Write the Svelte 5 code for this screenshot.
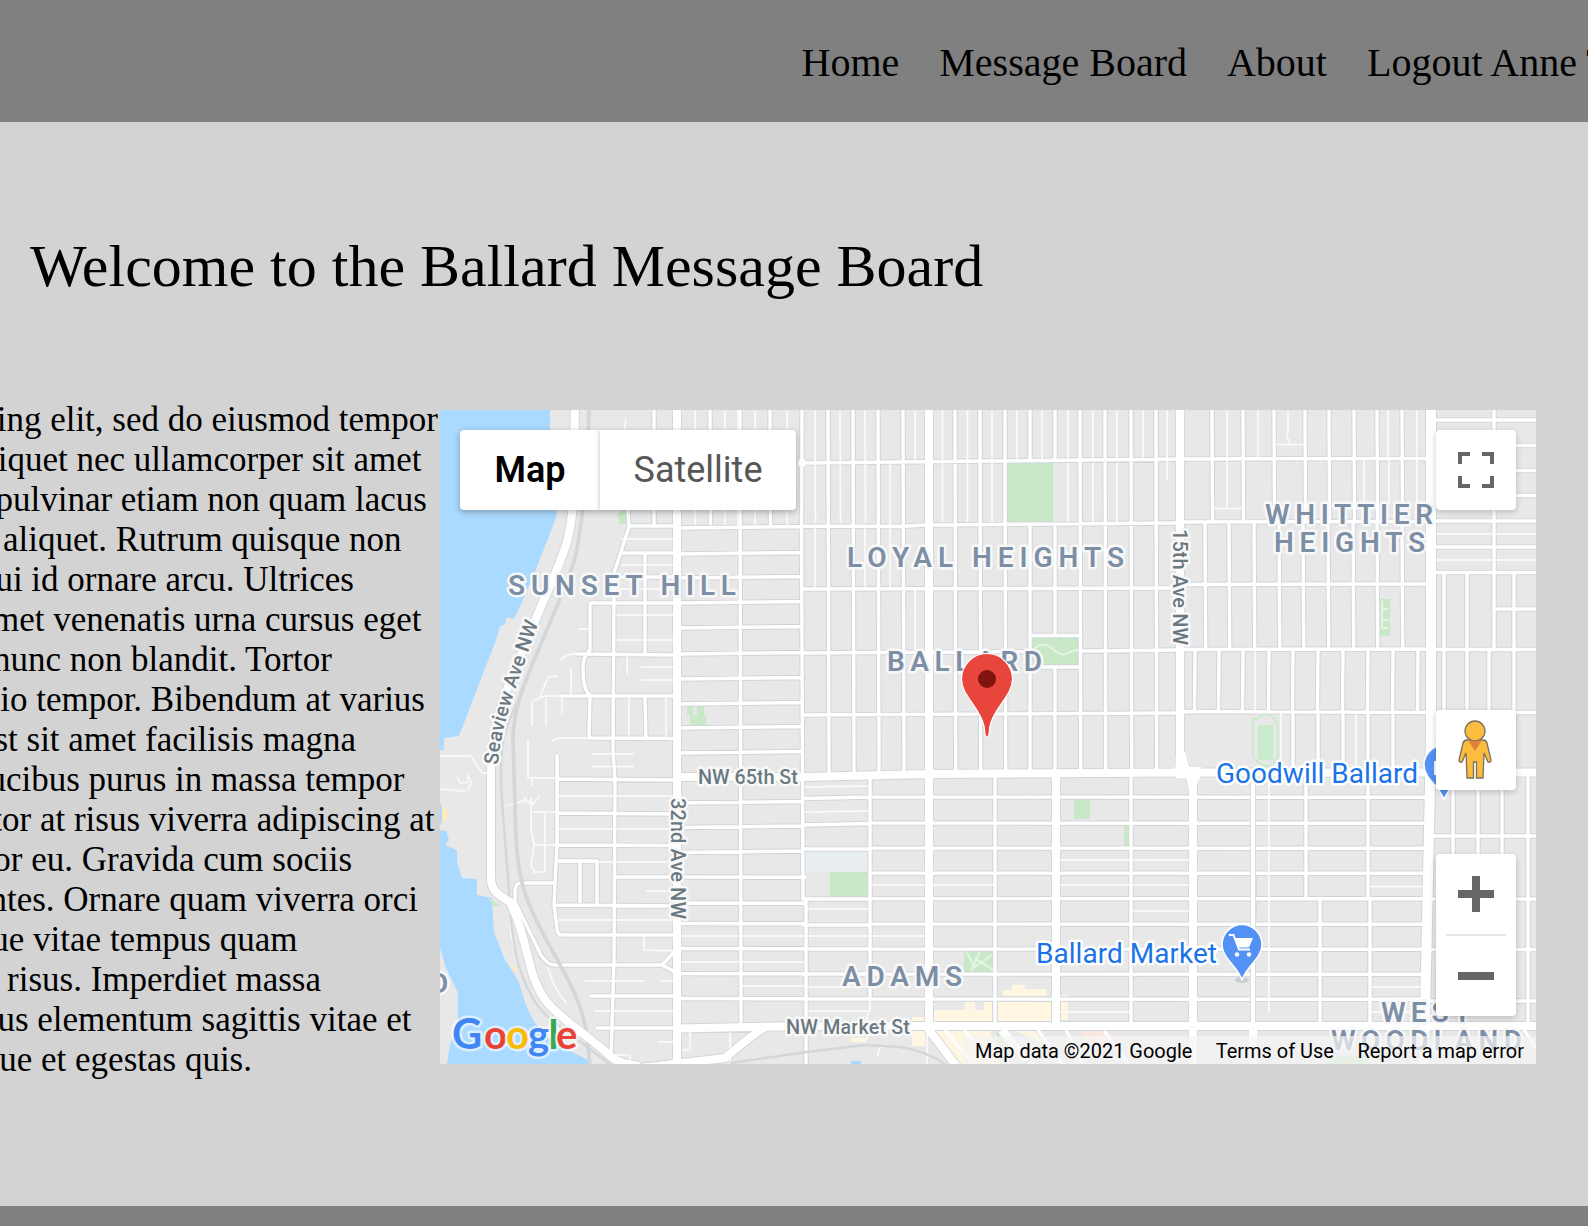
<script>
  const nav = ['Home', 'Message Board', 'About', 'Logout Anne Thompson'];

  // Each line ends at its own right edge and runs off the left side of the page.
  const lines = [
    ['cing elit, sed do eiusmod tempor', 438],
    ['liquet nec ullamcorper sit amet', 421.5],
    ['pulvinar etiam non quam lacus', 427],
    ['aliquet. Rutrum quisque non', 401.5],
    ['qui id ornare arcu. Ultrices', 354],
    ['amet venenatis urna cursus eget', 421.5],
    ['nunc non blandit. Tortor', 332],
    ['dio tempor. Bibendum at varius', 425],
    ['est sit amet facilisis magna', 356],
    ['aucibus purus in massa tempor', 404.5],
    ['tor at risus viverra adipiscing at', 434.5],
    ['tor eu. Gravida cum sociis', 352],
    ['ntes. Ornare quam viverra orci', 418],
    ['que vitae tempus quam', 297.5],
    ['risus. Imperdiet massa', 321],
    ['cus elementum sagittis vitae et', 411.5],
    ['que et egestas quis.', 252]
  ];

  // [x list, y start, y end, slant]
  const down = (xs, a, b, s = 0) => xs.map((x) => `M${x},${a}L${x + s},${b}`).join('');
  // [y list, x start, x end, rise]
  const across = (ys, a, b, s = 0) => ys.map((y) => `M${a},${y}L${b},${y + s}`).join('');

  const minor =
    down([828, 853, 878, 903], 410, 773, 1) +
    down([955, 980, 1005, 1080, 1105, 1131, 1156], 410, 771, 0.7) +
    'M1030,410V462M1005,462V523M1030,524V771M1055,410V462M1055,524V634M1055,666V771M1030,635.5H1079M1030,667H1079' +
    across([463], 802, 1180, -4) + 'M802,526L900,526.500L925,525L1180,523' +
    across([589], 802, 1180, -1) + 'M802,653L1030,651.500M1079,651L1180,650' + across([715], 802, 1180, -2) +
    'M802,410L801.500,520L803,900' + 'M806,900V1064' +
    down([740], 410, 1023, 1) +
    down([654], 410, 526) + down([710, 770], 410, 525, 0.5) +
    across([528, 554, 578, 603, 628, 654, 679, 704, 728, 753, 803, 827.5, 852.5], 677, 802, -1.5) +
    across([877, 903, 923.5, 948.5, 973.5, 998.5], 677, 806, 0.3) +
    'M628,510L629,527L614,573V590L613,750L615,780L614,960L611,1057' +
    'M629,526H677M622,553H677M616,577H677M677,579M590,603H677M590,603V650Q583,656 583,668Q583,690 590,695L589,738M577,654L677,655M560,696H677M589,738L677,738.500' +
    'M645,553V653M645,697L646,738M558,779L677,780M558,813L677,814M557,845L677,845.500M557,755V842L554,905L557,928Q557,935 563,935H677' +
    'M558,861H597V904M580,861V903M554,905L677,906M555,883H521Q515,883 515,892V902L520,912L541,955Q547,965 555,965H662L675,951M662,965L677,973M590,996H677M596,1028H677M615,877H677' +
    down([870], 778, 1000, 0) + down([995, 1131], 773, 1025, 0) +
    across([798.500, 825], 802, 870, -1.5) + across([797, 823, 848, 873, 898.500, 924, 949, 974, 999], 870, 1425, 0.3) +
    across([849, 899, 925, 949, 974, 999], 802, 870) +
    'M1306,775V898M1368,775V898M1320,898V1025M1370,898V1025' +
    down([1212, 1243, 1274, 1305, 1329, 1354, 1377, 1402], 410, 523, 0.5) +
    down([1205, 1229, 1254, 1279, 1303, 1328, 1353, 1377, 1402], 523, 648, 0.7) +
    down([1195, 1219, 1243, 1269, 1293, 1318, 1343, 1368, 1393, 1418], 648, 712, -0.5) +
    down([1293, 1318, 1343, 1368, 1393], 712, 773) +
    across([459, 522, 584.5, 649.5], 1180, 1431, -0.5) + across([711.5], 1180, 1431, 1) +
    across([420, 445.5, 470.5, 495.5, 521, 547, 572.500, 649.5, 712.5], 1431, 1536) +
    'M1494,410V649M1495,609H1536' + down([1444, 1467], 572, 712) + 'M1489,649V712' + down([1514], 572, 772) +
    down([1453, 1478, 1502], 775, 855) + down([1528], 775, 1023) + across([836, 899, 949.5, 1001], 1427, 1536);

  const lane =
    down([815, 840, 865], 410, 523, 0.5) + 'M915,410V460M865,525V588M815,525V588M890,463V588M915,590V650' +
    down([942.500, 967.500, 992, 1017, 1042, 1068, 1093, 1117, 1143], 410, 460) +
    down([942.500, 967.500, 992, 1068, 1093, 1117], 463, 522) + 'M1167,410V480' +
    down([695, 725, 755, 787], 410, 525) + 'M738,410V525' +
    across([539, 565], 622, 673) + across([589, 615, 640], 615, 673) + across([667, 680], 641, 673) +
    'M578,629H590M577,654Q570,652 560,660M560,696L545,696Q532,700 532,704V726M546,698V726M562,695V714M540,697L548,677L558,676M571,669V695M627,655V674M629,697V738M666,697V738M626,419L624,432' +
    across([754, 766.5], 592, 634) + across([796, 829, 862, 920], 558, 673) + across([891], 646, 673) +
    'M558,755V842M528,740V778H558M532,778V786M533,812H558M533,845H558M531,798V828L534,845L531,865L535,873M545,812V872M533,872H543M540,796L532,805M524,798L532,805M552,741L558,738H590' +
    across([981], 585, 645) + across([981], 661, 677) + across([1011], 594, 677) + 'M658,1042H677M644,936V950L675,951' +
    across([936, 962], 677, 806) + across([986], 741, 806) + across([787, 812], 804, 869, -1) +
    across([860, 885], 1058, 1131) + across([885], 870, 995) + across([860, 885, 911], 1131, 1190) +
    across([936], 806, 925) + across([909, 987, 1011], 806, 870) + across([1012], 1058, 1131) +
    'M1269,775V1013M1370,886.500H1425M1370,987H1425M1370,1012H1425' +
    'M1227,410V508M1212,508.500H1243M1258,410V457M1288,410V430L1287,436L1290,444M1275,444.500H1305M1388,410V457M1417,410V457M1364,460V505M1389,460V505M1417,460V505M1255,649V711M1281,712V765M1356,712V765M1431,534H1536M1431,560H1536' +
    'M440,756H471L482,773H488M510,905L511,935L519,963M548,967Q555,993 567,1003M870,998V1010L867,1016V1040M730,1032V1064M927,1030V1064M878,1056Q878,1046 885,1046';

  const major =
    'M677,410V1064M929,410V1030L958,1068M1056,773V1026M1180,410V755L1193,785V1064M1193,775V785' +
    'M677,777L802,777L929,774L1180,772.500H1536M677,1028.500L802,1026L1536,1026M766,1027Q758,1030 725,1058L640,1068' +
    'M575,408C573,500 574,520 566,545C557,573 542,602 534,624C506,690 492,720 491,762V878C491,892 500,896 510,902C519,920 523,937 530,965C535,984 540,993 546,1001C560,1019 590,1037 610,1056C618,1063 628,1065 640,1066';

  const labels = [
    ['SUNSET HILL', 508, 595, 228], ['LOYAL HEIGHTS', 847, 567, 277], ['BALLARD', 887, 671, 155],
    ['WHITTIER', 1265, 524, 168], ['HEIGHTS', 1274, 552, 151], ['ADAMS', 842, 986, 120],
    ['WEST', 1381, 1022, 90], ['WOODLAND', 1331, 1050, 191], ['D', 430, 993, 19]
  ];
</script>

<div class="page">
  <header>
    <nav>
      {#each nav as item}<a href="#top">{item}</a>{/each}
    </nav>
  </header>
  <main>
    <h1>Welcome to the Ballard Message Board</h1>
    <section>
      <div class="copy">
        {#each lines as [text, width]}<p style:width="{width}px">{text}</p>{/each}
      </div>
      <div class="map">
        <svg class="tiles" viewBox="440 410 1096 654">
          <rect x="440" y="410" width="1096" height="654" fill="#e8e8e8" />
          <g fill="#aadaff">
            <path d="M440,410H550V500L557,510L556,518L533,577L517,613L513,619L507,617L505,624L500,627L496,640L459,736L444,738V750H440Z" />
            <path d="M440,830L446,831L449,840L445,845L457,850V862L462,878L477,879V895L492,898L494,932L505,960L518,980L526,1005L533,1020L543,1034L560,1046L588,1060V1064H447L450,1045L458,1020V993L446,968L440,948Z" />
            <path d="M440,803Q447,815 440,825ZM851,1061H861V1064H851Z" />
          </g>
          <g fill="#ffebb8"><path d="M442,804Q453,815 442,823ZM509,964L518,969L515,972Z" /></g>
          <g fill="#c8e8c8">
            <path d="M1007,463H1053V522H1007ZM1032,637H1079V665H1032ZM617,515L622,510H628V524H620ZM687,705H693V715H697V705H704V715H706V725H690V715H687ZM1379,599H1390V636H1379ZM1074,800H1090V819H1074ZM1124,825H1129V846H1124ZM830,872H868V897H830ZM964,951H993V972H964ZM488,898L502,906H493ZM1255,876H1257V919H1254ZM997,1031L1005,1044L997,1043ZM1332,1056H1370V1064H1325Z" />
            <path d="M1258,725H1273V760H1258Z" fill="#c9eccb" />
          </g>
          <rect x="805" y="849" width="63" height="23" fill="#e8edf0" />
          <g fill="#fef6e0">
            <path d="M934,1010H965V1002H975V1010H984V1002H992V1021H934ZM997,1002H1051V1021H997ZM1003,990H1012V985H1025V989H1047V996H1003ZM1061,995H1068V1020H1061ZM912,1017H925V1046H912ZM930,1031H990L1000,1064H960ZM1015,1031H1035L1045,1044ZM851,1038H866V1042H851Z" />
            <path d="M1080,1031H1108L1120,1045H1085Z" fill="#fae6e3" />
          </g>
          <g fill="none" stroke-linejoin="round">
            <path class="casing thin" d={minor} />
            <path class="casing wide" d={major} />
            <path class="casing giant" d="M1431,410V735L1424,1064" />
            <path class="lane" d={lane} />
            <path d={minor} stroke="#fff" stroke-width="3.4" />
            <path d="M945,1030L973,1064M964,1030L994,1064M1038,1030L1063,1064M1066,1030L1083,1064M1104,1031L1129,1064M1522,1027L1545,1060" stroke="#fff" stroke-width="3" />
            <path d="M1002,1030L1031,1066" stroke="#fff" stroke-width="8" />
            <path d="M1034,650C1037,643 1048,644 1053,649C1060,656 1065,656 1070,652C1074,650 1076,650 1079,650M966,951L975,967L992,955M971,971L980,952M975,958L993,970M1382,601V628H1388M1381,609H1388M1381,620H1389" stroke="#e3f4e3" stroke-width="2" />
            <path d="M1253,719H1257Q1266,710 1275,719Q1278,724 1278,731V755Q1275,766 1266,766Q1256,764 1253,755Z" stroke="#c9eccb" stroke-width="2" />
            <path d="M457,777L460,783L468,782V775L471,781Q471,791 463,791L440,789M505,806L527,800M690,1032V1050H682M612,1055H630V1064" stroke="#f6f6f6" stroke-width="2" />
            <path class="rail" d="M589,410C588,480 582,520 577,549C573,570 563,590 557,606L537,653C524,684 513,710 513,740L515,802Q515,850 521,878C526,903 540,928 553,952C566,976 581,1000 586,1030L590,1066" />
            <path class="rail slim" d="M519,700C498,735 500,770 502,802L508,878L511,920C514,950 520,975 529,991C536,1007 550,1020 562,1028L615,1068" />
            <path class="rail slim" d="M730,1063L807,1052L865,1045L900,1047C920,1050 936,1057 947,1066M1020,1066L1034,1058" />
            <path d={major} stroke="#fff" stroke-width="8.2" />
            <path d="M1431,410V735L1424,1064" stroke="#fff" stroke-width="10" />
            <path class="casing" d="M1253,777V1022" stroke-width="6" />
            <path d="M1253,775V1026" stroke="#fff" stroke-width="4.400" />
            <path d="M1253,1026V1064" stroke="#fff" stroke-width="8" />
          </g>
          <path d="M1176,752H1185L1189,767H1201V776L1197,784V792H1189L1187,778H1176L1174,769L1176,766Z" fill="#fff" />
          <circle cx="802" cy="463" r="4" fill="#fff" />

          <g class="area">
            {#each labels as [name, x, y, length]}
              <text {x} {y} textLength={length}>{name}</text>
            {/each}
          </g>
          <g class="street">
            <text x="698" y="784" textLength="100">NW 65th St</text>
            <text x="786" y="1034" textLength="124">NW Market St</text>
            <text transform="translate(1173 529) rotate(90)" textLength="116">15th Ave NW</text>
            <text transform="translate(671 798) rotate(90)" textLength="121">32nd Ave NW</text>
            <path id="seaview" d="M498,765C500,730 514,692 540,619" fill="none" stroke="none" />
            <text><textPath href="#seaview" textLength="148">Seaview Ave NW</textPath></text>
          </g>
          <g class="place">
            <text x="1216" y="783" textLength="202">Goodwill Ballard</text>
            <text x="1036" y="963" textLength="181">Ballard Market</text>
          </g>
          <ellipse cx="1242" cy="980" rx="7" ry="3" fill="#c9ccd2" />
          <g class="pins">
            <path d="M1242,980.500C1239,967 1222,959 1222,944.500A20,20 0 1 1 1262,944.500C1262,959 1245,967 1242,980.500Z" />
            <path d="M1444,800.500C1441,787 1424,779 1424,765A20,20 0 1 1 1464,765C1464,779 1447,787 1444,800.500Z" />
          </g>
          <path d="M1434,761H1445V775H1434Z" fill="#fff" />
          <path d="M1229,935H1233.500L1239,949.500H1250" fill="none" stroke="#fff" stroke-width="1.8" />
          <path d="M1235,938H1253L1249,947.500H1239Z" fill="#fff" />
          <circle cx="1237" cy="954.500" r="2.200" fill="#fff" /><circle cx="1249" cy="954.500" r="2.200" fill="#fff" />
          <path d="M987,737C984,737 985,731 984,726C980,707 961.500,696 961.500,679A25.500,25.500 0 1 1 1012.500,679C1012.500,696 994,707 990,726C989,731 990,737 987,737Z" fill="#e8453c" stroke="#fff" stroke-width="1.200" />
          <circle cx="987" cy="679" r="9" fill="#811411" />
          <g class="logo">
            <text y="1049"><tspan x="452" class="cap" fill="#4285f4">G</tspan><tspan x="484" fill="#ea4335">o</tspan><tspan x="506" fill="#fbbc05">o</tspan><tspan x="528" fill="#4285f4">g</tspan><tspan x="548.500" fill="#34a853">l</tspan><tspan x="556" fill="#ea4335">e</tspan></text>
          </g>
        </svg>

        <div class="types"><button class="on">Map</button><button>Satellite</button></div>
        <button class="control full" aria-label="Fullscreen">
          <svg viewBox="0 0 18 18"><path d="M0,0V6H2V2H6V0ZM12,0V2H16V6H18V0ZM16,16H12V18H18V12H16ZM2,12H0V18H6V16H2Z" fill="#666" /></svg>
        </button>
        <button class="control peg" aria-label="Street view">
          <svg viewBox="0 0 34 60" class="person">
            <g fill="#fbbc3f" stroke="#77705f" stroke-width="1.300">
              <path d="M9,20L25,20Q28,20 29,23L33,40Q33,43 30,42L26,33L25,58H18.500V42H15.500V58H9L8,33L4,42Q1,43 1,40L5,23Q6,20 9,20Z" />
              <circle cx="17" cy="11" r="10" />
            </g>
            <path d="M10,20Q17,22 24,20L17,31Z" fill="#e0803a" />
          </svg>
        </button>
        <div class="zoom">
          <button aria-label="Zoom in"><svg viewBox="0 0 18 18"><path d="M7,0H11V7H18V11H11V18H7V11H0V7H7Z" fill="#666" /></svg></button>
          <hr />
          <button aria-label="Zoom out"><svg viewBox="0 0 18 18"><path d="M0,7H18V11H0Z" fill="#666" /></svg></button>
        </div>
        <div class="legal"><span>Map data ©2021 Google</span><span>Terms of Use</span><span>Report a map error</span></div>
      </div>
    </section>
  </main>
  <footer></footer>
</div>

<style>
  :global(body) { margin: 0; overflow: hidden; }
  .page { height: 1226px; width: 1588px; overflow: hidden; display: flex; flex-direction: column; background: #d3d3d3; font-family: 'Liberation Serif', serif; color: #000; }
  header { height: 122px; background: #808080; display: flex; align-items: center; flex: none; }
  nav { display: flex; gap: 40px; margin-left: 801.500px; padding-top: 4px; white-space: nowrap; }
  nav a { color: #000; text-decoration: none; font-size: 40px; line-height: 46px; }
  main { height: 1084px; flex: none; }
  h1 { margin: 0; padding: 110px 0 0 30px; height: 166px; font-size: 60px; font-weight: 400; line-height: 69px; white-space: nowrap; }
  section { display: flex; align-items: flex-start; }
  .copy { width: 440px; flex: none; padding-top: 1px; }
  p { margin: 0; height: 40px; line-height: 41px; font-size: 35px; display: flex; justify-content: flex-end; white-space: nowrap; overflow: hidden; }
  .map { position: relative; width: 1096px; height: 654px; margin-top: 12px; overflow: hidden; font-family: Roboto, sans-serif; }
  .tiles { display: block; width: 1096px; height: 654px; }
  .casing { stroke: #d2d5d9; }
  .thin { stroke-width: 5.4; }
  .wide { stroke-width: 10; }
  .giant { stroke-width: 12; }
  .lane { stroke: #fbfbfb; stroke-width: 1.6; }
  .rail { stroke: #d3d7da; stroke-width: 3.800; }
  .slim { stroke-width: 2.4; }
  text { paint-order: stroke; stroke: #f8f8f8; stroke-linejoin: round; }
  .area { font-size: 28px; font-weight: 600; fill: #7d8fa5; }
  .area text { stroke-width: 5px; }
  .street { font-size: 20px; font-weight: 500; fill: #6b7880; }
  .street text { stroke-width: 5px; }
  .place { font-size: 28px; fill: #1a73e8; }
  .place text { stroke-width: 5px; stroke: #fff; }
  .pins { fill: #5491f5; stroke: #fff; stroke-width: 1.500; }
  .logo { font-family: Lato, sans-serif; font-size: 40px; font-weight: 700; }
  .logo text { stroke: rgba(255, 255, 255, 0.6); stroke-width: 5px; }
  .cap { font-size: 41.500px; }
  button { border: 0; padding: 0; background: #fff; font-family: inherit; display: flex; align-items: center; justify-content: center; }
  .types { position: absolute; left: 20px; top: 20px; display: flex; height: 80px; box-shadow: 0 2px 6px rgba(0, 0, 0, 0.3); border-radius: 4px; overflow: hidden; }
  .types button { width: 196px; font-size: 36px; color: #565656; box-shadow: 0 0 5px rgba(0, 0, 0, 0.25); }
  .types .on { width: 140px; color: #000; font-weight: 600; }
  .control { position: absolute; right: 20px; width: 80px; height: 80px; border-radius: 4px; box-shadow: 0 2px 6px rgba(0, 0, 0, 0.2); }
  .full { top: 20px; }
  .peg { top: 300px; }
  .control svg, .zoom svg { width: 36px; height: 36px; }
  .control .person { width: 34px; height: 60px; margin-right: 2px; }
  .zoom { position: absolute; right: 20px; top: 444px; width: 80px; height: 162px; background: #fff; border-radius: 4px; box-shadow: 0 2px 6px rgba(0, 0, 0, 0.2); }
  .zoom button { width: 80px; height: 80px; background: none; }
  hr { margin: 0 10px; border: 0; height: 2px; background: #e6e6e6; }
  .legal { position: absolute; right: 0; bottom: 0; height: 28px; padding: 0 12px; display: flex; gap: 23.500px; font-size: 19.970px; line-height: 30px; background: rgba(245, 245, 245, 0.7); white-space: nowrap; }
  footer { height: 20px; background: #808080; flex: none; }
</style>
